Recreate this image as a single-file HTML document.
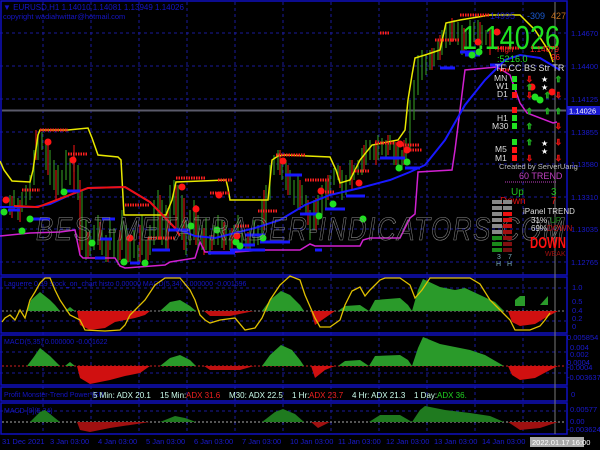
<!DOCTYPE html>
<html><head><meta charset="utf-8"><style>
body{margin:0;background:#000;width:600px;height:450px;overflow:hidden;font-family:"Liberation Sans",sans-serif}
svg{display:block}
</style></head><body>
<svg width="600" height="450" viewBox="0 0 600 450" xmlns="http://www.w3.org/2000/svg" font-family="Liberation Sans, sans-serif">
<rect width="600" height="450" fill="#000"/>
<g stroke="#1a1a9a" stroke-width="1" stroke-dasharray="3,3">
<line x1="43" y1="2" x2="43" y2="434"/><line x1="91" y1="2" x2="91" y2="434"/><line x1="139" y1="2" x2="139" y2="434"/><line x1="187" y1="2" x2="187" y2="434"/><line x1="235" y1="2" x2="235" y2="434"/><line x1="283" y1="2" x2="283" y2="434"/><line x1="331" y1="2" x2="331" y2="434"/><line x1="379" y1="2" x2="379" y2="434"/><line x1="427" y1="2" x2="427" y2="434"/><line x1="475" y1="2" x2="475" y2="434"/><line x1="523" y1="2" x2="523" y2="434"/>
<line x1="0" y1="33" x2="566" y2="33"/><line x1="0" y1="66" x2="566" y2="66"/><line x1="0" y1="99" x2="566" y2="99"/><line x1="0" y1="132" x2="566" y2="132"/><line x1="0" y1="164" x2="566" y2="164"/><line x1="0" y1="197" x2="566" y2="197"/><line x1="0" y1="229" x2="566" y2="229"/><line x1="0" y1="262" x2="566" y2="262"/>
<line x1="0" y1="288" x2="566" y2="288"/><line x1="0" y1="321" x2="566" y2="321"/><line x1="0" y1="352" x2="566" y2="352"/><line x1="0" y1="373" x2="566" y2="373"/><line x1="0" y1="411" x2="566" y2="411"/>
</g>
<g fill="none" stroke="#1010c0" stroke-width="1.5">
<rect x="1" y="1" width="566" height="274"/>
<rect x="1" y="277" width="566" height="56"/>
<rect x="1" y="335" width="566" height="50"/>
<rect x="1" y="387" width="566" height="14"/>
<rect x="1" y="403" width="566" height="31"/>
</g>
<line x1="555" y1="2" x2="555" y2="434" stroke="#777" stroke-width="1"/>
<line x1="2" y1="110.5" x2="566" y2="110.5" stroke="#5a5a6a" stroke-width="2"/>
<text x="3" y="10" font-size="8" fill="#1515c8">▼ EURUSD,H1  1.14010 1.14081 1.13949 1.14026</text>
<text x="3" y="19" font-size="7.5" fill="#1515c8">copyright wadiahwittar@hotmail.com</text>
<g stroke-width="1.2">
<path d="M10 195V215M14 190V210M18 198V220M22 192V212M26 185V205M30 175V200M34 150V185M38 135V160M42 132V150M46 140V170M50 150V185M54 160V190M58 165V195M62 170V190M66 150V180M70 158V185M74 155V172M78 165V200M82 190V250M86 220V260M90 230V256M94 225V250M98 215V245M102 230V255M106 235V262M110 220V250M114 228V258M118 240V265M122 210V250M126 225V262M130 235V262M134 230V258M138 245V265M142 215V255M146 240V262M150 225V255M154 200V245M158 190V240M162 200V245M166 205V250M170 185V225M174 180V215M178 185V230M182 195V240M186 220V255M190 210V245M194 200V240M198 215V250M202 225V250M206 218V250M210 235V255M214 225V245M218 215V245M222 220V248M226 225V245M230 230V250M234 225V245M238 215V245M242 230V252M246 238V252M250 230V250M254 220V245M258 225V245M262 200V240M266 185V225M270 165V200M274 155V175M278 150V170M282 158V180M286 160V190M290 170V195M294 180V205M298 175V210M302 185V205M306 195V215M310 210V240M314 200V230M318 195V225M322 185V215M326 180V210M330 175V195M334 168V185M338 165V180M342 170V200M346 175V195M350 160V185M354 165V180M358 160V175M362 148V175M366 140V165M370 140V160M374 145V160M378 135V160M382 138V155M386 140V158M390 135V150M394 140V165M398 145V165M402 150V170M406 138V160M410 100V150M414 80V120M418 55V95M422 50V80M426 55V75M430 50V70M434 48V66M438 40V60M442 30V55M446 25V48M450 22V45M454 20V40M458 22V45M462 25V55M466 30V50M470 20V45M474 22V42M478 20V40M482 25V45M486 30V45" stroke="#2f8a1f"/>
<path d="M12 196V218M20 200V222M36 130V160M48 140V175M56 170V200M74 145V190M80 180V255M88 232V258M100 222V250M108 240V262M120 230V260M128 240V262M140 225V262M148 238V260M160 195V240M168 208V250M176 185V230M184 198V250M196 205V245M204 228V255M212 235V250M224 222V250M232 228V250M248 232V252M264 190V230M280 150V175M288 165V195M300 180V210M308 200V225M316 198V230M328 175V200M340 166V188M352 160V190M364 145V170M376 140V165M388 135V155M396 142V165M404 140V165M432 48V70M440 35V60M452 18V42M464 28V52M480 22V48M490 30V55" stroke="#d01010"/>
</g>
<polyline fill="none" stroke="#e8e800" stroke-width="1.5" points="0,161 4,170 12,181 30,182 33,170 38,135 40,130 68,130 88,128 92,138 98,155 118,157 121,160 124,215 166,215 172,200 176,182 226,180 228,188 230,200 268,200 272,160 278,156 285,155 330,157 336,170 340,183 350,180 360,160 372,145 398,140 405,130 408,100 412,75 415,58 425,55 440,50 446,23 460,20 490,15 520,15 535,30 550,53 553,62"/>
<polyline fill="none" stroke="#d020d0" stroke-width="1.5" points="0,236 30,233 60,232 75,230 80,255 83,258 115,258 120,266 125,268 165,265 170,262 195,258 200,242 205,252 235,252 265,250 300,250 310,244 315,246 360,246 363,240 370,238 400,238 410,218 415,214 418,172 452,170 455,150 460,110 465,70 497,67 510,75 520,103 527,113 553,123 557,122"/>
<polyline fill="none" stroke="#1818ff" stroke-width="2" points="0,207 35,207 50,204 70,195 88,188 125,187 150,202 175,228 195,236 215,238 235,233 255,228 280,220 305,205 330,195 360,188 390,180 410,172 425,165 445,140 465,105 485,80 505,60 520,55 540,58 560,70"/>
<polyline fill="none" stroke="#f01010" stroke-width="2" points="14,206 36,207 38,207 88,188 125,187 150,202 175,228 180,236"/>
<g stroke="#ff2020" stroke-width="3" stroke-dasharray="1.5,1">
<line x1="40" y1="130" x2="68" y2="130"/><line x1="68" y1="154" x2="88" y2="154"/><line x1="22" y1="190" x2="40" y2="190"/><line x1="176" y1="178" x2="205" y2="178"/><line x1="125" y1="205" x2="150" y2="205"/><line x1="218" y1="180" x2="232" y2="180"/><line x1="210" y1="193" x2="230" y2="193"/><line x1="276" y1="155" x2="305" y2="155"/><line x1="305" y1="180" x2="330" y2="180"/><line x1="320" y1="192" x2="335" y2="192"/><line x1="258" y1="211" x2="277" y2="211"/><line x1="410" y1="150" x2="422" y2="150"/><line x1="435" y1="40" x2="460" y2="40"/><line x1="460" y1="15" x2="490" y2="15"/><line x1="375" y1="143" x2="395" y2="143"/><line x1="380" y1="33" x2="390" y2="33"/><line x1="400" y1="145" x2="420" y2="145"/><line x1="355" y1="171" x2="370" y2="171"/><line x1="148" y1="238" x2="175" y2="238"/><line x1="235" y1="226" x2="250" y2="226"/><line x1="495" y1="48" x2="520" y2="48"/><line x1="500" y1="70" x2="510" y2="70"/></g>
<g stroke="#1818ff" stroke-width="3">
<line x1="65" y1="191" x2="80" y2="191"/><line x1="8" y1="210" x2="20" y2="210"/><line x1="32" y1="219" x2="50" y2="219"/><line x1="102" y1="219" x2="115" y2="219"/><line x1="100" y1="239" x2="112" y2="239"/><line x1="152" y1="250" x2="170" y2="250"/><line x1="95" y1="258" x2="105" y2="258"/><line x1="130" y1="263" x2="140" y2="263"/><line x1="168" y1="230" x2="190" y2="230"/><line x1="208" y1="253" x2="235" y2="253"/><line x1="238" y1="245" x2="255" y2="245"/><line x1="230" y1="250" x2="265" y2="250"/><line x1="260" y1="242" x2="290" y2="242"/><line x1="285" y1="175" x2="302" y2="175"/><line x1="300" y1="214" x2="318" y2="214"/><line x1="245" y1="235" x2="265" y2="235"/><line x1="325" y1="209" x2="345" y2="209"/><line x1="346" y1="196" x2="365" y2="196"/><line x1="380" y1="158" x2="405" y2="158"/><line x1="405" y1="168" x2="420" y2="168"/><line x1="315" y1="250" x2="322" y2="250"/><line x1="440" y1="68" x2="455" y2="68"/><line x1="465" y1="55" x2="480" y2="55"/><line x1="490" y1="65" x2="500" y2="65"/><line x1="460" y1="52" x2="475" y2="52"/></g>
<g fill="#20e020">
<circle cx="4" cy="212" r="3.5"/><circle cx="22" cy="231" r="3.5"/><circle cx="30" cy="219" r="3.5"/><circle cx="64" cy="192" r="3.5"/><circle cx="92" cy="243" r="3.5"/><circle cx="124" cy="262" r="3.5"/><circle cx="145" cy="263" r="3.5"/><circle cx="191" cy="226" r="3.5"/><circle cx="217" cy="230" r="3.5"/><circle cx="236" cy="242" r="3.5"/><circle cx="240" cy="246" r="3.5"/><circle cx="263" cy="238" r="3.5"/><circle cx="319" cy="216" r="3.5"/><circle cx="333" cy="204" r="3.5"/><circle cx="363" cy="219" r="3.5"/><circle cx="399" cy="168" r="3.5"/><circle cx="407" cy="162" r="3.5"/><circle cx="472" cy="55" r="3.5"/><circle cx="479" cy="52" r="3.5"/><circle cx="535" cy="97" r="3.5"/><circle cx="540" cy="100" r="3.5"/></g>
<g fill="#ff1515">
<circle cx="6" cy="200" r="3.5"/><circle cx="48" cy="142" r="3.5"/><circle cx="73" cy="160" r="3.5"/><circle cx="130" cy="238" r="3.5"/><circle cx="182" cy="187" r="3.5"/><circle cx="219" cy="195" r="3.5"/><circle cx="196" cy="209" r="3.5"/><circle cx="237" cy="236" r="3.5"/><circle cx="283" cy="161" r="3.5"/><circle cx="321" cy="191" r="3.5"/><circle cx="359" cy="183" r="3.5"/><circle cx="400" cy="144" r="3.5"/><circle cx="407" cy="150" r="3.5"/><circle cx="497" cy="32" r="3.5"/><circle cx="478" cy="42" r="3.5"/><circle cx="532" cy="87" r="3.5"/><circle cx="552" cy="92" r="3.5"/></g>
<text x="36" y="240" font-size="32" font-style="italic" fill="none" stroke="#8a8a8a" stroke-width="0.6" letter-spacing="2" textLength="530" lengthAdjust="spacingAndGlyphs">BEST-METATRADER-INDICATORS.COM</text>
<text x="490" y="19" font-size="9" fill="#1515c8">14995</text><text x="527" y="19" font-size="9" fill="#1a5ad0">-309</text><text x="551" y="19" font-size="9" fill="#c07020">427</text>
<text x="462" y="49" font-size="33" fill="#20e020" textLength="98" lengthAdjust="spacingAndGlyphs">1.14026</text>
<text x="497" y="52" font-size="8" fill="#ff2020">High</text><text x="530" y="52" font-size="8" fill="#ff2020">1.14079</text><text x="551" y="60" font-size="8" fill="#ff2020">96</text>
<text x="497" y="62" font-size="9" fill="#20e020">:52</text><text x="510" y="62" font-size="9" fill="#20e020">16.0</text>
<text x="495" y="71" font-size="9" fill="#ddd">TF CC BS Str TR</text>
<g font-size="8.5" fill="#ddd"><text x="494" y="81">MN</text><text x="496" y="89">W1</text><text x="497" y="97">D1</text><text x="497" y="121">H1</text><text x="492" y="129">M30</text><text x="495" y="152">M5</text><text x="495" y="161">M1</text></g>
<g fill="#20e020"><rect x="512" y="76" width="5" height="6"/><rect x="512" y="84" width="5" height="6"/><rect x="512" y="115" width="5" height="6"/><rect x="512" y="123" width="5" height="6"/><rect x="512" y="139" width="5" height="6"/></g>
<g fill="#ff1515"><rect x="512" y="92" width="5" height="6"/><rect x="512" y="107" width="5" height="6"/><rect x="512" y="147" width="5" height="6"/><rect x="512" y="155" width="5" height="6"/></g>
<g font-size="8" fill="none" stroke-width="0.8"><text x="526" y="82" stroke="#e01010">⇩</text><text x="526" y="90" stroke="#20b020">⇧</text><text x="526" y="98" stroke="#e01010">⇩</text><text x="526" y="114" stroke="#20b020">⇧</text><text x="526" y="129" stroke="#20b020">⇧</text><text x="526" y="145" stroke="#20b020">⇧</text><text x="526" y="161" stroke="#e01010">⇩</text>
<text x="555" y="82" stroke="#20b020">⇧</text><text x="555" y="98" stroke="#e01010">⇩</text><text x="555" y="114" stroke="#20b020">⇧</text><text x="555" y="129" stroke="#e01010">⇩</text><text x="555" y="145" stroke="#e01010">⇩</text><text x="555" y="161" stroke="#e01010">⇩</text>
<text x="544" y="114" stroke="#20b020">⇧</text><text x="544" y="98" stroke="#20b020">⇧</text></g>
<g fill="#fff" font-size="8"><text x="541" y="82">★</text><text x="541" y="90">★</text><text x="541" y="146">★</text><text x="541" y="154">★</text></g>
<text x="499" y="169" font-size="7.5" fill="#bbb">Created by ServerUang</text>
<text x="519" y="179" font-size="9" fill="#c040c0">60 TREND</text>
<line x1="505" y1="182" x2="556" y2="182" stroke="#c040c0" stroke-dasharray="1,1"/>
<text x="511" y="195" font-size="10" fill="#20c020">Up</text><text x="551" y="195" font-size="10" fill="#20c020">3</text>
<text x="500" y="204" font-size="10" fill="#e01010">Down</text><text x="551" y="204" font-size="10" fill="#e01010">7</text>
<g><rect x="492" y="200" width="10" height="4" fill="#888"/><rect x="492" y="206" width="10" height="4" fill="#888"/><rect x="492" y="212" width="10" height="4" fill="#888"/><rect x="492" y="218" width="10" height="4" fill="#888"/><rect x="492" y="224" width="10" height="4" fill="#888"/><rect x="492" y="230" width="10" height="4" fill="#888"/><rect x="492" y="236" width="10" height="4" fill="#1a8a1a"/><rect x="492" y="242" width="10" height="4" fill="#1a8a1a"/><rect x="492" y="248" width="10" height="4" fill="#1a8a1a"/>
<rect x="503" y="200" width="9" height="4" fill="#888"/><rect x="503" y="206" width="9" height="4" fill="#888"/><rect x="503" y="212" width="9" height="4" fill="#f01010"/><rect x="503" y="218" width="9" height="4" fill="#d01010"/><rect x="503" y="224" width="9" height="4" fill="#c01010"/><rect x="503" y="230" width="9" height="4" fill="#a01010"/><rect x="503" y="236" width="9" height="4" fill="#901010"/><rect x="503" y="242" width="9" height="4" fill="#801010"/><rect x="503" y="248" width="9" height="4" fill="#701010"/></g>
<text x="523" y="214" font-size="8" fill="#ddd">iPanel  TREND</text>
<text x="531" y="223" font-size="8" fill="#ddd">31%</text><text x="550" y="223" font-size="8" fill="#1a8a1a">UP</text>
<text x="531" y="231" font-size="8" fill="#ddd">69%</text><text x="547" y="231" font-size="8" fill="#c01010">DOWN</text>
<text x="530" y="248" font-size="16" font-weight="bold" fill="#ff1010" textLength="36" lengthAdjust="spacingAndGlyphs">DOWN</text>
<text x="545" y="256" font-size="7" fill="#a01010">WEAK</text>
<g font-size="7" fill="#7ab"><text x="497" y="259">3</text><text x="508" y="259">7</text><text x="496" y="266">H</text><text x="507" y="266">H</text></g>
<g font-size="7.5" fill="#1a1ad0"><text x="571" y="36">1.14670</text><text x="571" y="69">1.14400</text><text x="571" y="102">1.14125</text><text x="571" y="135">1.13855</text><text x="571" y="167">1.13580</text><text x="571" y="200">1.13310</text><text x="571" y="232">1.13035</text><text x="571" y="265">1.12765</text>
<text x="572" y="290">1.0</text><text x="572" y="304">0.5</text><text x="572" y="313">0.4</text><text x="572" y="321">0.2</text><text x="572" y="329">0</text>
<text x="567" y="340">0.005854</text><text x="570" y="350">0.004</text><text x="570" y="357">0.002</text><text x="567" y="365">0.0004</text><text x="567" y="370">-0.0004</text><text x="567" y="380">-0.003637</text>
<text x="571" y="397">0</text><text x="570" y="412">0.00577</text><text x="570" y="424">0.00</text><text x="567" y="432">-0.003624</text></g>
<rect x="567" y="106" width="33" height="9" fill="#1a1ad0"/><text x="569" y="113.5" font-size="7.5" fill="#fff">1.14026</text>
<line x1="2" y1="311" x2="566" y2="311" stroke="#888" stroke-dasharray="2,2"/>
<text x="4" y="286" font-size="7" fill="#1515c8">Laguerre 0.39  stock_on_chart histo 0.00000  MACD(5,34) 0.000000 -0.001596</text>
<path d="M27 311L31 300L40 292L50 300L55 305L60 311Z" fill="#2a9a2a"/>
<path d="M65 311L70 307L75 311Z" fill="#2a9a2a"/>
<path d="M77 311L80 325L90 330L105 328L115 322L125 320L135 318L145 315L150 311Z" fill="#d01010"/>
<path d="M160 311L170 302L180 300L190 306L196 311Z" fill="#2a9a2a"/>
<path d="M204 311L210 316L230 316L254 311Z" fill="#c01010"/>
<path d="M262 311L270 300L281 291L290 295L300 305L304 311Z" fill="#2a9a2a"/>
<path d="M311 311L315 325L322 320L335 311Z" fill="#d01010"/>
<path d="M338 311L345 306L360 305L369 311Z" fill="#2a9a2a"/>
<path d="M369 311L375 300L400 298L408 305L412 311Z" fill="#2a9a2a"/>
<path d="M412 311L418 290L423 279L440 287L455 290L465 288L480 295L495 302L504 311Z" fill="#2a9a2a"/>
<path d="M508 311L512 322L520 326L535 324L545 318L558 311Z" fill="#d01010"/>
<path d="M515 300L520 296L525 296L525 306L515 306Z" fill="#2a9a2a"/>
<path d="M540 305L548 296L548 305Z" fill="#2a9a2a"/>
<polyline fill="none" stroke="#e0c000" stroke-width="1.3" points="2,322 5,318 10,315 15,320 20,310 25,318 30,300 35,292 40,283 45,278 50,278 55,290 60,300 70,315 80,320 85,330 105,331 120,330 125,325 130,315 145,300 155,285 165,278 180,278 190,290 195,300 200,315 205,320 210,323 220,320 235,318 245,330 255,328 262,318 270,300 280,285 290,276 300,280 305,295 315,318 320,327 330,327 340,320 345,305 352,291 360,287 365,296 370,290 380,280 385,278 400,278 410,285 415,298 422,290 430,278 470,278 480,284 490,300 500,310 505,315 510,320 515,330 530,330 540,326 545,320 550,313"/>
<line x1="2" y1="366" x2="566" y2="366" stroke="#d02020" stroke-dasharray="2,2"/>
<text x="4" y="344" font-size="7" fill="#1515c8">MACD(5,35) 0.000000 -0.001622</text>
<path d="M27 366L33 358L40 348L50 356L60 366Z" fill="#2a9a2a"/><path d="M65 366L70 362L75 366Z" fill="#2a9a2a"/>
<path d="M77 366L80 378L90 384L110 380L125 376L140 373L150 366Z" fill="#d01010"/>
<path d="M160 366L170 358L180 355L190 360L196 366Z" fill="#2a9a2a"/>
<path d="M204 366L210 370L240 370L254 366Z" fill="#c01010"/>
<path d="M262 366L270 355L281 345L292 350L300 360L304 366Z" fill="#2a9a2a"/>
<path d="M311 366L315 378L325 370L335 366Z" fill="#d01010"/>
<path d="M338 366L345 361L360 360L369 366Z" fill="#2a9a2a"/>
<path d="M369 366L375 356L400 355L408 360L412 366Z" fill="#2a9a2a"/>
<path d="M412 366L418 348L423 337L440 344L455 347L470 350L485 355L504 366Z" fill="#2a9a2a"/>
<path d="M508 366L512 375L520 380L535 378L550 370L558 366Z" fill="#d01010"/>
<text x="4" y="397" font-size="7" fill="#1515c8">Profit Monster-Trend Power (EU</text>
<g font-size="8" fill="#cfe"><text x="93" y="398">5 Min:  ADX 20.1</text><text x="160" y="398">15 Min:</text><text x="229" y="398">M30:  ADX 22.5</text><text x="292" y="398">1 Hr:</text><text x="352" y="398">4 Hr:  ADX 21.3</text><text x="414" y="398">1 Day:</text></g>
<text x="186" y="398" font-size="8" fill="#f02020">ADX 31.6</text><text x="309" y="398" font-size="8" fill="#f02020">ADX 23.7</text><text x="437" y="398" font-size="8" fill="#20d020">ADX 36.</text>
<line x1="2" y1="422" x2="566" y2="422" stroke="#aaa" stroke-dasharray="2,2"/>
<text x="4" y="413" font-size="7" fill="#1515c8">MACD [0](5,34)</text>
<path d="M30 422L40 412L45 410L55 418L60 422Z" fill="#1f7a1f"/>
<path d="M77 422L80 430L90 432L110 428L150 422Z" fill="#a01010"/>
<path d="M160 422L175 416L185 418L196 422Z" fill="#1f7a1f"/>
<path d="M262 422L275 412L283 409L295 414L304 422Z" fill="#1f7a1f"/>
<path d="M311 422L318 428L330 422Z" fill="#a01010"/>
<path d="M369 422L380 415L400 415L412 422Z" fill="#1f7a1f"/>
<path d="M412 422L420 410L425 406L445 410L470 413L490 416L504 422Z" fill="#1f7a1f"/>
<path d="M508 422L520 430L540 428L558 422Z" fill="#a01010"/>
<g font-size="7.5" fill="#1a1ad0"><text x="2" y="444">31 Dec 2021</text><text x="50" y="444">3 Jan 03:00</text><text x="98" y="444">4 Jan 03:00</text><text x="146" y="444">5 Jan 03:00</text><text x="194" y="444">6 Jan 03:00</text><text x="242" y="444">7 Jan 03:00</text><text x="290" y="444">10 Jan 03:00</text><text x="338" y="444">11 Jan 03:00</text><text x="386" y="444">12 Jan 03:00</text><text x="434" y="444">13 Jan 03:00</text><text x="482" y="444">14 Jan 03:00</text></g>
<rect x="530" y="437" width="54" height="10" fill="#aaa"/><text x="532" y="445" font-size="7.5" fill="#fff">2022.01.17 16:00</text>
</svg>
</body></html>
